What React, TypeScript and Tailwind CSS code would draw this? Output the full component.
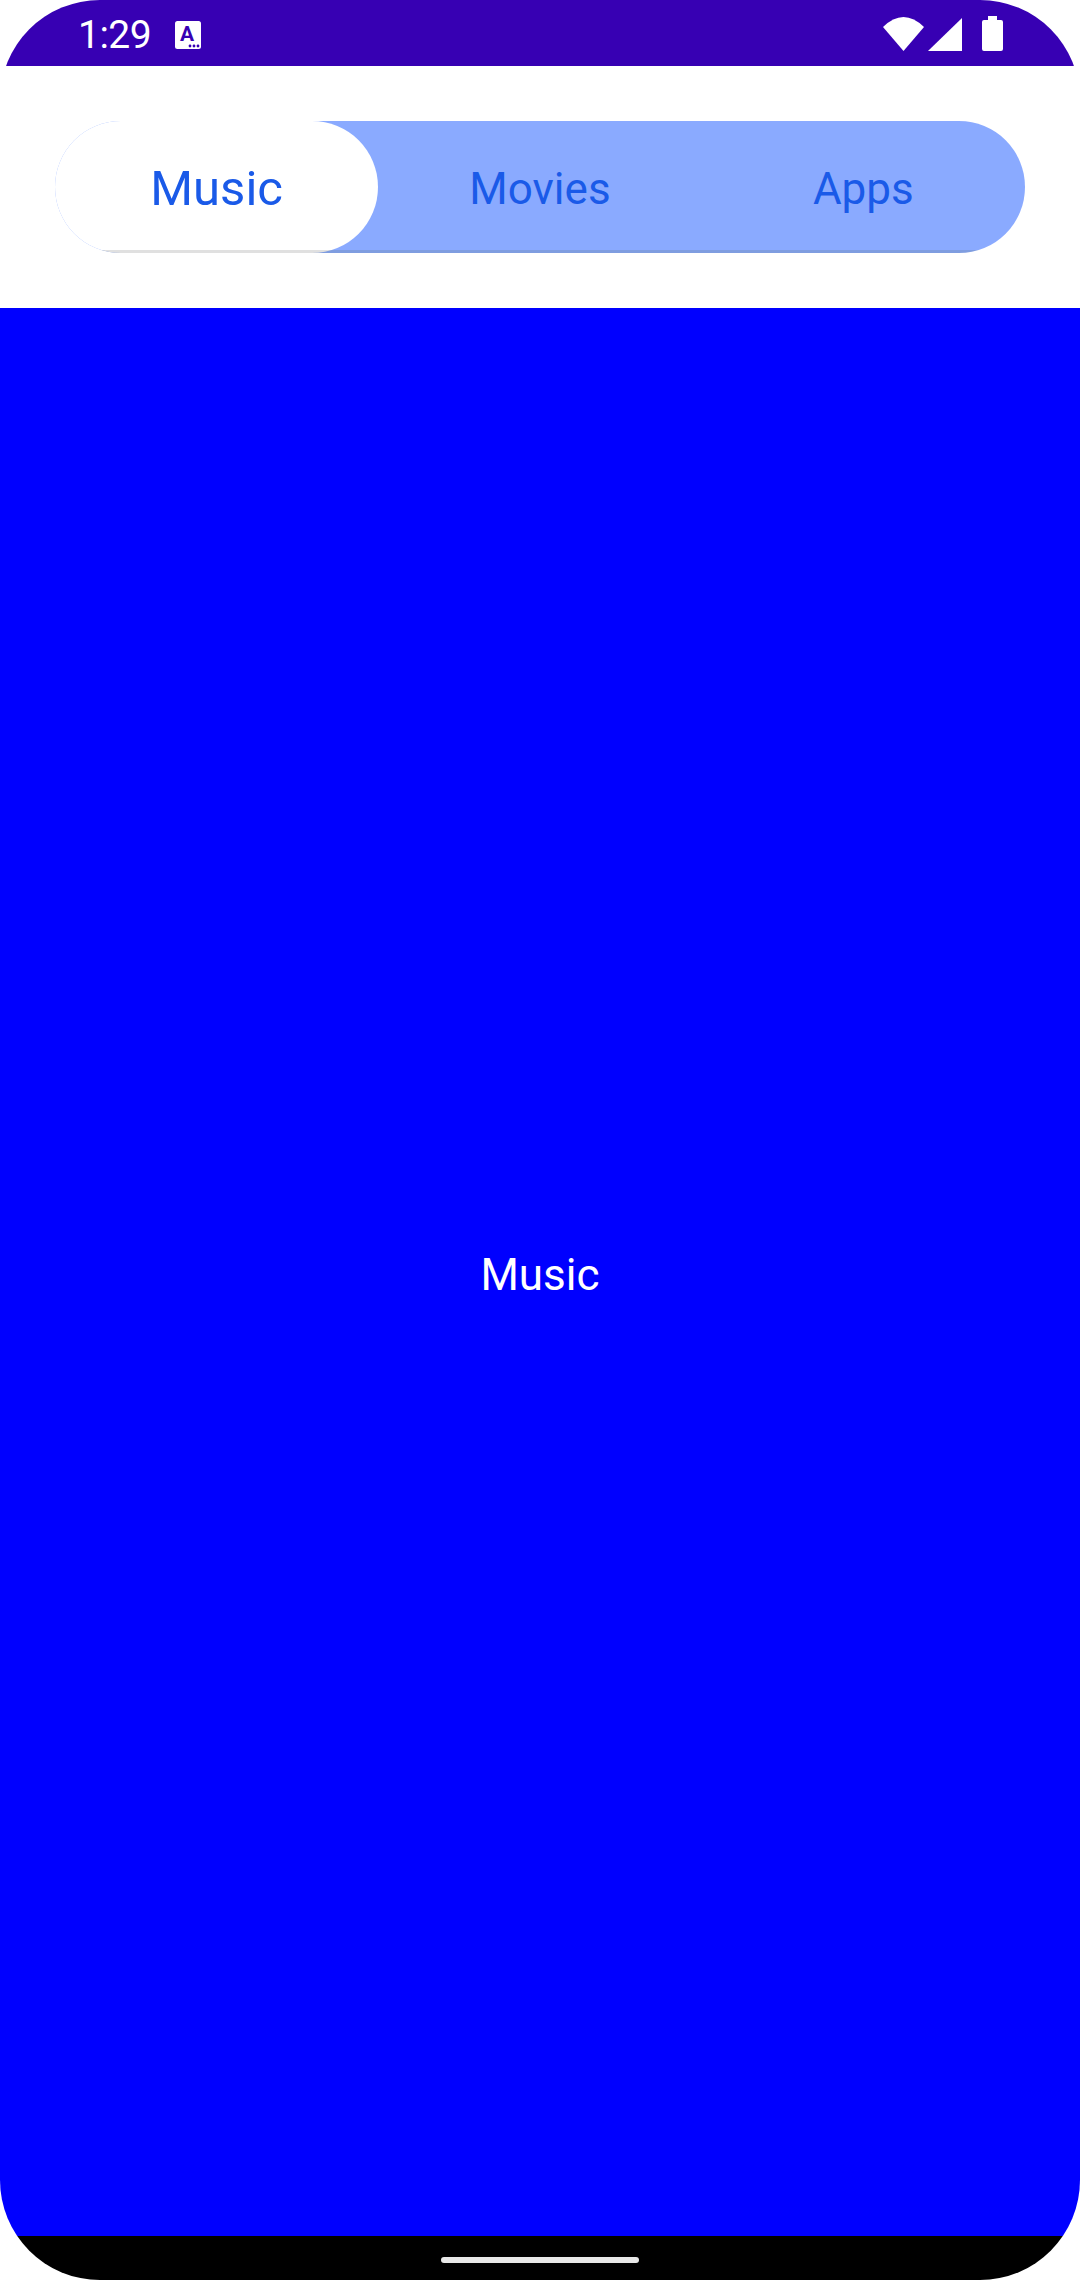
const TABS = ['Music', 'Movies', 'Apps']

const StatusBar = () => (
  <div className="h-[66px] shrink-0 bg-[#3700b3] flex items-start pl-[78px] pr-[77px] text-white">
    <span className="mt-[12px] text-[39px] leading-[47px] tracking-[-0.5px]">1:29</span>
    <svg className="ml-[24px] mt-[21px]" width="26" height="28" viewBox="0 0 26 28">
      <rect width="26" height="28" rx="2.5" fill="#fff" />
      <text x="12" y="20" textAnchor="middle" fontSize="21" fontWeight="700" fill="#3700b3" fontFamily="Roboto, sans-serif">A</text>
      <circle cx="15" cy="25" r="1.4" fill="#3700b3" />
      <circle cx="19" cy="25" r="1.4" fill="#3700b3" />
      <circle cx="23" cy="25" r="1.4" fill="#3700b3" />
    </svg>
    <svg className="ml-auto mt-[17px]" width="41" height="34" viewBox="0 0 41 34">
      <path d="M20.5 34 L0 10 Q20.5 -10 41 10 Z" fill="#fff" />
    </svg>
    <svg className="ml-[4px] mt-[18px]" width="34" height="33" viewBox="0 0 34 33">
      <path d="M34 0 V33 H0 Z" fill="#fff" />
    </svg>
    <svg className="ml-[20px] mt-[16px]" width="21" height="36" viewBox="0 0 21 36">
      <path d="M6 0 H15 V4 H19 Q21 4 21 6 V33 Q21 35 19 35 H2 Q0 35 0 33 V6 Q0 4 2 4 H6 Z" fill="#fff" />
    </svg>
  </div>
)

const TabSwitcher = () => (
  <div className="shrink-0 h-[242px] pt-[55px] px-[55px]">
    <div className="relative flex h-[132px] rounded-[66px] bg-[linear-gradient(to_bottom,#8aaaff_129px,#7f9de0_129px)]">
      {/* selected thumb */}
      <div className="absolute left-0 top-0 w-[323px] h-[132px] rounded-[66px] bg-[linear-gradient(to_bottom,#ffffff_129px,#e0e0e0_129px)]" />
      {TABS.map((tab, idx) => (
        <div
          key={tab}
          className={
            idx === 0
              ? 'relative flex-1 flex items-center justify-center pt-[4px] text-[49px] text-[#1a5ae8]'
              : 'relative flex-1 flex items-center justify-center pt-[3px] text-[44px] text-[#1a5ae8]'
          }
        >
          {tab}
        </div>
      ))}
    </div>
  </div>
)

export default function App() {
  return (
    <div className="w-[1080px] h-[2280px] bg-white">
      <div
        className="w-full h-full flex flex-col rounded-[100px] overflow-hidden"
        style={{ fontFamily: 'Roboto, sans-serif' }}
      >
        <StatusBar />
        <TabSwitcher />
        <div className="flex-1 bg-[#0000ff] flex items-center justify-center pt-[6px] text-white text-[44px]">
          Music
        </div>
        <div className="h-[44px] shrink-0 bg-black flex justify-center pt-[21px]">
          <div className="w-[198px] h-[6px] rounded-full bg-[#e8e8e8]" />
        </div>
      </div>
    </div>
  )
}
